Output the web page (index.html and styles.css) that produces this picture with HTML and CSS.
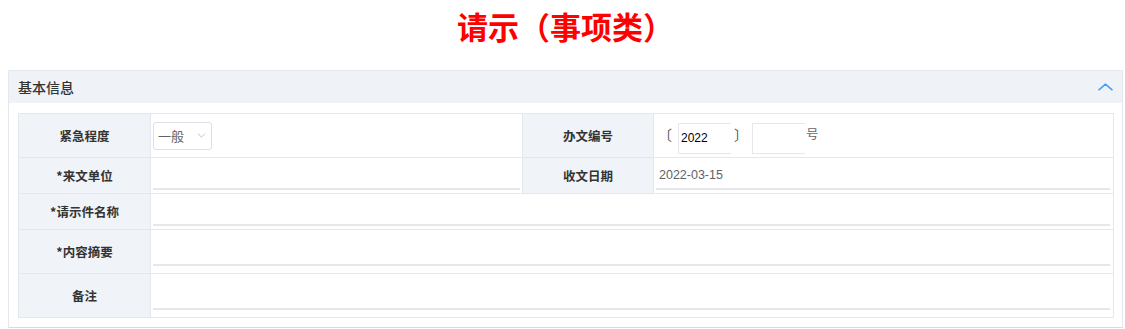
FILE: index.html
```html
<!DOCTYPE html>
<html lang="zh-CN">
	<head>
		<meta charset="UTF-8" />
		<meta name="viewport" content="width=device-width, initial-scale=1.0" />
		<title>请示（事项类）</title>
		<link rel="stylesheet" href="styles.css">
	</head>
	<body>
		<div class="page">
			<h1 class="doc-title">请示（事项类）</h1>
			<div class="panel">
				<div class="panel-header">
					<span>基本信息</span>
					<svg class="collapse-icon" xmlns="http://www.w3.org/2000/svg" viewBox="0 0 16 8" fill="none" stroke="currentColor" stroke-width="1.6" stroke-linecap="round" stroke-linejoin="round">
						<polyline points="1,7 8,1 15,7"></polyline>
					</svg>
				</div>
				<div class="panel-body">
					<div class="form-grid">
						<div class="label">紧急程度</div>
						<div class="value">
							<div class="select">
								<span>一般</span>
								<svg class="select-arrow" xmlns="http://www.w3.org/2000/svg" viewBox="0 0 10 6" fill="none" stroke="currentColor" stroke-width="1.2" stroke-linecap="round" stroke-linejoin="round">
									<polyline points="1,1 5,5 9,1"></polyline>
								</svg>
							</div>
						</div>
						<div class="label">办文编号</div>
						<div class="value doc-number">
							<span class="bracket bracket-left">〔</span>
							<input class="num-input" type="text" value="2022" />
							<span class="bracket bracket-right">〕</span>
							<input class="num-input" type="text" value="" />
							<span class="num-suffix">号</span>
						</div>

						<div class="label">*来文单位</div>
						<div class="value value-top">
							<input class="line-input" type="text" />
						</div>
						<div class="label">收文日期</div>
						<div class="value value-top">
							<div class="date-text">2022-03-15</div>
						</div>

						<div class="label">*请示件名称</div>
						<div class="value value-top wide">
							<input class="line-input" type="text" />
						</div>

						<div class="label">*内容摘要</div>
						<div class="value value-top wide">
							<input class="line-input area" type="text" />
						</div>

						<div class="label">备注</div>
						<div class="value value-top wide">
							<input class="line-input area" type="text" />
						</div>
					</div>
				</div>
			</div>
		</div>
	</body>
</html>
```

FILE: styles.css
```css
:root {
	--border: #e4e7ed;
	--label-bg: #f0f3f8;
	--header-bg: #eff2f7;
	--text: #303133;
	--muted: #606266;
	--line: #e6e7ea;
	--accent: #409eff;
}
body {
	margin: 0;
	font-family: 'Liberation Sans', 'Noto Sans CJK SC', sans-serif;
	color: var(--text);
	background: #fff;
}
.page {
	padding: 0 2px 0 8px;
}
.doc-title {
	margin: 0 0 24px;
	padding-top: 6px;
	font-family: 'Noto Sans CJK SC', sans-serif;
	font-size: 31px;
	line-height: 40px;
	font-weight: 700;
	color: #ff0000;
	text-align: center;
}
.panel {
	border: 1px solid var(--border);
	border-bottom-color: #d9dbe0;
}
.panel-header {
	display: flex;
	align-items: center;
	justify-content: space-between;
	height: 32px;
	padding: 0 9px 0 9px;
	background-color: var(--header-bg);
	font-family: 'Noto Sans CJK SC', sans-serif;
	font-size: 14px;
	font-weight: 500;
	color: #333;
}
.collapse-icon {
	width: 15px;
	height: 8px;
	color: var(--accent);
	margin-bottom: 1px;
}
.panel-body {
	padding: 10px 8px 9px 9px;
}
.form-grid {
	display: grid;
	grid-template-columns: 131px 371px 130px 1fr;
	grid-template-rows: 43px 35px 35px 43px 43px;
	gap: 1px;
	background-color: var(--border);
	border: 1px solid var(--border);
}
.label {
	display: flex;
	align-items: center;
	justify-content: center;
	background-color: var(--label-bg);
	font-family: 'Noto Sans CJK SC', sans-serif;
	font-size: 12.5px;
	font-weight: 700;
	color: #333;
}
.value {
	display: flex;
	align-items: center;
	padding: 0 2px;
	background-color: #fff;
	min-width: 0;
}
.value-top {
	align-items: flex-start;
}
.wide {
	grid-column: 2 / 5;
	padding-right: 3px;
}
.select {
	display: flex;
	align-items: center;
	justify-content: space-between;
	box-sizing: border-box;
	width: 59px;
	height: 28px;
	padding: 0 5px 0 4px;
	border: 1px solid #dcdfe6;
	border-radius: 3px;
	font-family: 'Noto Sans CJK SC', sans-serif;
	font-size: 13px;
	color: var(--muted);
}
.select-arrow {
	width: 9px;
	height: 5px;
	color: #c0c4cc;
}
.doc-number {
	padding-left: 4px;
}
.bracket,
.num-suffix {
	font-family: 'Noto Sans CJK SC', sans-serif;
	font-size: 14px;
	line-height: 16px;
	color: #555;
	margin-bottom: 4px;
}
.bracket-left {
	margin-right: 6px;
}
.bracket-right {
	margin-left: 3px;
	margin-right: 4px;
}
.num-suffix {
	margin-left: 1px;
	font-size: 12.5px;
	color: #666;
}
.num-input {
	box-sizing: border-box;
	width: 53px;
	height: 31px;
	margin-top: 5px;
	padding: 0 2px;
	border: 1px solid var(--line);
	border-right: none;
	outline: none;
	font-family: 'Liberation Sans', sans-serif;
	font-size: 12px;
	color: #000;
	background: #fff;
}
.line-input {
	box-sizing: border-box;
	width: 100%;
	height: 32px;
	margin: 0;
	padding: 0 4px;
	border: none;
	border-bottom: 2px solid var(--line);
	outline: none;
	font-size: 12px;
	background: transparent;
}
.line-input.area {
	height: 36px;
}
.date-text {
	box-sizing: border-box;
	width: 100%;
	height: 32px;
	padding: 10px 0 0 3px;
	border-bottom: 2px solid var(--line);
	font-size: 12.5px;
	line-height: 14px;
	color: var(--muted);
	margin-right: 1px;
}
```
